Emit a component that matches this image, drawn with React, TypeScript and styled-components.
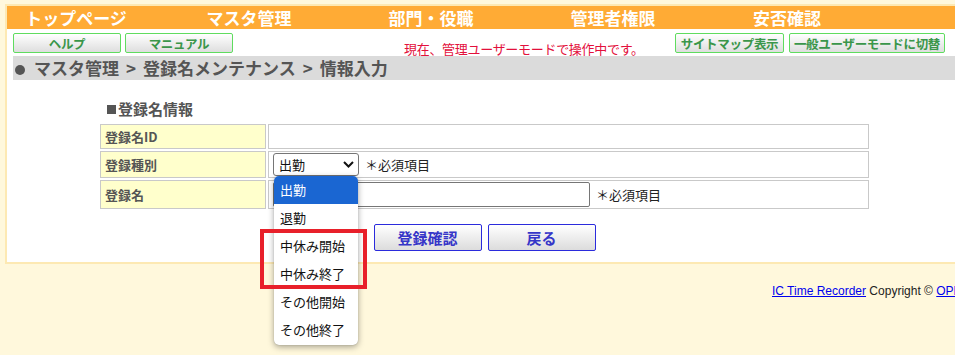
import React from "react";
import styled, { createGlobalStyle } from "styled-components";

const GlobalStyle = createGlobalStyle`
  html {
    overflow: hidden;
  }
  html, body {
    margin: 0;
    padding: 0;
    background: #fff8dc;
  }
  body {
    min-height: 355px;
    font-family: "Noto Sans CJK JP", "Liberation Sans", sans-serif;
    color: #333;
  }
  * { box-sizing: border-box; }
`;

const Page = styled.div`
  width: 1100px;
  padding: 4px 0 0 5px;
`;

const Frame = styled.div`
  width: 1060px;
  background: #fff;
  border: 2px solid #fde9b3;
  padding-bottom: 11px;
`;

const Nav = styled.nav`
  display: grid;
  grid-template-columns: 138px 208px 156px 208px 140px 1fr;
  height: 23px;
  background: #ffab35;
`;

const NavItem = styled.a`
  display: flex;
  align-items: center;
  justify-content: center;
  color: #fff;
  font-weight: 700;
  font-size: 17px;
  line-height: 23px;
  white-space: nowrap;
  text-decoration: none;
`;

const ToolRow = styled.div`
  display: grid;
  grid-template-columns: 220px 442px 270px;
  align-items: start;
  margin: 4px 0 0 6px;
  height: 20px;
`;

const ButtonGroup = styled.div<{ $gap: number }>`
  display: flex;
  gap: ${(p) => p.$gap}px;
`;

const GreenButton = styled.button<{ $w: number }>`
  width: ${(p) => p.$w}px;
  height: 20px;
  padding: 0;
  border: 1.5px solid #5fdc5f;
  border-radius: 2px;
  background: linear-gradient(#ffffff, #dedede);
  color: #3a964a;
  font-family: inherit;
  font-weight: 700;
  font-size: 12.5px;
  line-height: 17px;
  white-space: nowrap;
  letter-spacing: -0.3px;
`;

const Notice = styled.div`
  padding: 8px 0 0 171px;
  color: #e3103c;
  font-size: 13px;
  line-height: 16px;
  white-space: nowrap;
  letter-spacing: -0.3px;
`;

const Breadcrumb = styled.div`
  margin: 3px 0 0 6px;
  height: 24px;
  background: #dbdbdb;
  color: #555;
  font-weight: 700;
  font-size: 17px;
  line-height: 24px;
  padding-left: 2px;
  white-space: nowrap;
`;

const Dot = styled.span`
  display: inline-block;
  width: 10px;
  height: 10px;
  border-radius: 50%;
  background: #555;
  margin-right: 9px;
  vertical-align: 0px;
`;

const Sep = styled.span`
  margin: 0 7px;
`;

const SectionTitle = styled.div`
  margin: 20px 0 0 100px;
  color: #555;
  font-weight: 700;
  font-size: 15px;
  line-height: 18px;
`;

const Square = styled.span`
  display: inline-block;
  width: 9px;
  height: 9px;
  background: #555;
  margin-right: 2px;
  vertical-align: 1px;
`;

const FormGrid = styled.div`
  display: grid;
  grid-template-columns: 166px 601px;
  grid-template-rows: 25px 27px 29px;
  gap: 2px;
  margin: 6px 0 0 93px;
  width: 769px;
`;

const LabelCell = styled.div`
  display: flex;
  align-items: center;
  padding-left: 4px;
  background: #ffffcc;
  border: 1px solid #c9c9c9;
  color: #555;
  font-weight: 700;
  font-size: 13px;
  line-height: 16px;
`;

const ValueCell = styled.div`
  display: flex;
  align-items: center;
  padding-left: 4px;
  border: 1px solid #c9c9c9;
  font-size: 13px;
  color: #222;
`;

const SelectBox = styled.div`
  position: relative;
  display: flex;
  align-items: center;
  justify-content: space-between;
  width: 86px;
  height: 23px;
  padding: 0 4px 0 5px;
  border: 1px solid #767676;
  border-radius: 3px;
  background: #fff;
  font-size: 13px;
  color: #111;
`;

const TextInput = styled.div`
  width: 317px;
  height: 25px;
  border: 1px solid #767676;
  border-radius: 2px;
  background: #fff;
`;

const Required = styled.span`
  margin-left: 6px;
  font-size: 13px;
  color: #222;
  white-space: nowrap;
`;

const OptionList = styled.ul`
  position: absolute;
  top: calc(100% + 1px);
  left: 0;
  width: 84px;
  margin: 0;
  padding: 0 0 1px;
  list-style: none;
  background: #fff;
  border-radius: 5px;
  box-shadow: 0 2px 6px rgba(0, 0, 0, 0.35), 0 0 1px rgba(0, 0, 0, 0.3);
  z-index: 5;
`;

const OptionItem = styled.li<{ $active?: boolean }>`
  height: 28px;
  padding-left: 6px;
  font-size: 13px;
  line-height: 28px;
  white-space: nowrap;
  color: ${(p) => (p.$active ? "#fff" : "#111")};
  background: ${(p) => (p.$active ? "#1a66d2" : "transparent")};
  border-radius: ${(p) => (p.$active ? "5px 5px 0 0" : "0")};
`;

const Highlight = styled.div`
  position: absolute;
  left: -14px;
  top: 53px;
  width: 107px;
  height: 60px;
  border: 4px solid #e8202a;
  pointer-events: none;
`;

const ActionRow = styled.div`
  display: flex;
  justify-content: center;
  gap: 6px;
  margin: 15px 0 0 93px;
  width: 769px;
`;

const BlueButton = styled.button`
  width: 108px;
  height: 27px;
  padding: 0;
  border: 1.5px solid #2b2bdc;
  border-radius: 2px;
  background: linear-gradient(#ffffff, #dcdcdc);
  color: #3636c8;
  font-family: inherit;
  font-weight: 700;
  font-size: 15px;
  line-height: 24px;
`;

const Footer = styled.div`
  margin: 19px 0 0 767px;
  font-family: "Liberation Sans", "DejaVu Sans", sans-serif;
  font-size: 12px;
  line-height: 16px;
  white-space: nowrap;
  color: #222;
`;

const FooterLink = styled.a`
  color: #0000ee;
  text-decoration: underline;
`;

const Chevron = () => (
  <svg width="11" height="7" viewBox="0 0 11 7" aria-hidden>
    <polyline points="1,1 5.5,5.5 10,1" fill="none" stroke="#111" strokeWidth="2" />
  </svg>
);

const navItems = ["トップページ", "マスタ管理", "部門・役職", "管理者権限", "安否確認"];
const options = ["出勤", "退勤", "中休み開始", "中休み終了", "その他開始", "その他終了"];

export default function App() {
  return (
    <>
      <GlobalStyle />
      <Page>
        <Frame>
          <Nav>
            {navItems.map((n) => (
              <NavItem key={n}>{n}</NavItem>
            ))}
          </Nav>
          <ToolRow>
            <ButtonGroup $gap={4}>
              <GreenButton $w={108}>ヘルプ</GreenButton>
              <GreenButton $w={108}>マニュアル</GreenButton>
            </ButtonGroup>
            <Notice>現在、管理ユーザーモードで操作中です。</Notice>
            <ButtonGroup $gap={5}>
              <GreenButton $w={109}>サイトマップ表示</GreenButton>
              <GreenButton $w={156}>一般ユーザーモードに切替</GreenButton>
            </ButtonGroup>
          </ToolRow>
          <Breadcrumb>
            <Dot />
            マスタ管理<Sep>&gt;</Sep>登録名メンテナンス<Sep>&gt;</Sep>情報入力
          </Breadcrumb>
          <SectionTitle>
            <Square />
            登録名情報
          </SectionTitle>
          <FormGrid>
            <LabelCell>登録名ID</LabelCell>
            <ValueCell />
            <LabelCell>登録種別</LabelCell>
            <ValueCell>
              <SelectBox>
                <span>出勤</span>
                <Chevron />
                <OptionList>
                  {options.map((o, i) => (
                    <OptionItem key={o} $active={i === 0}>
                      {o}
                    </OptionItem>
                  ))}
                  <Highlight />
                </OptionList>
              </SelectBox>
              <Required>＊必須項目</Required>
            </ValueCell>
            <LabelCell>登録名</LabelCell>
            <ValueCell>
              <TextInput />
              <Required>＊必須項目</Required>
            </ValueCell>
          </FormGrid>
          <ActionRow>
            <BlueButton>登録確認</BlueButton>
            <BlueButton>戻る</BlueButton>
          </ActionRow>
        </Frame>
        <Footer>
          <FooterLink href="#">IC Time Recorder</FooterLink> Copyright ©{" "}
          <FooterLink href="#">OPENSYSTEM Co., Ltd.</FooterLink>
        </Footer>
      </Page>
    </>
  );
}
